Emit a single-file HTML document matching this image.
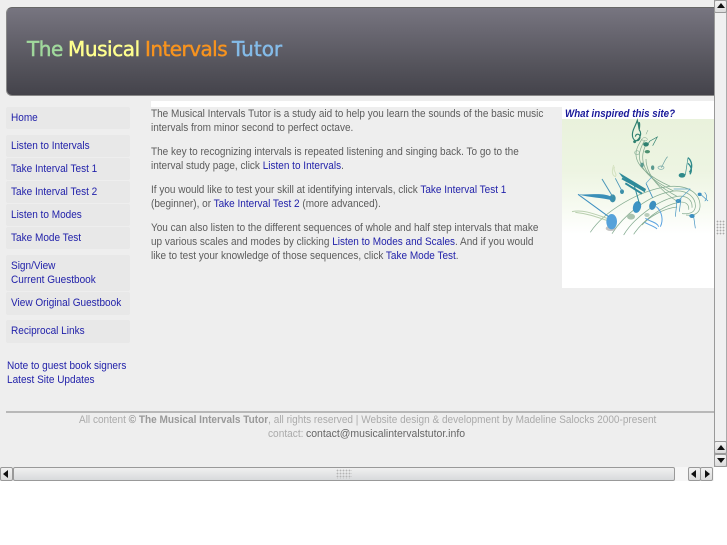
<!DOCTYPE html>
<html><head><meta charset="utf-8">
<style>
html,body{margin:0;padding:0;width:727px;height:545px;overflow:hidden;background:#fff}
*{box-sizing:border-box}
#page{position:absolute;left:0;top:0;width:714px;height:467px;background:#eee;overflow:hidden}
.t{position:absolute;white-space:nowrap;font-family:"Liberation Sans",Arial,sans-serif;font-size:11px;line-height:14px;color:#5c5c5c;transform:scaleX(.909);transform-origin:0 0;filter:blur(.25px)}
a{color:#2222aa;text-decoration:none}
.nb{position:absolute;left:6px;width:124px;background:#e8e8e8;border-radius:2px}
.n{position:absolute;left:11px;white-space:nowrap;font-family:"Liberation Sans",Arial,sans-serif;font-size:11px;line-height:14px;color:#2222aa;transform:scaleX(.912);transform-origin:0 0;filter:blur(.25px)}
#hdr{position:absolute;left:6px;top:7px;width:708px;height:89px;border-radius:6px 0 0 6px;background:linear-gradient(#777580,#6a6872 25%,#55545c 65%,#44434b);border-top:1px solid #666;border-left:1px solid #888;border-bottom:1px solid #888}
.h{position:absolute;top:37px;white-space:nowrap;font-family:"DejaVu Sans",sans-serif;font-size:20px;line-height:24px;font-weight:400;-webkit-text-stroke:.45px currentColor;letter-spacing:-.43px}
.sb{position:absolute;background:#f0f0f0}
.btn{position:absolute;background:linear-gradient(#f2f2f2,#dcdcdc);border:1px solid #999;border-radius:2px}
.a{position:absolute;width:0;height:0}
</style></head><body>
<div id="page">
<div id="hdr"></div>
<div class="h" style="left:27px;color:#a0d89c">The</div>
<div class="h" style="left:68px;color:#ffff8e">Musical</div>
<div class="h" style="left:145px;color:#f7931e;letter-spacing:-.55px">Intervals</div>
<div class="h" style="left:232px;color:#84bbe8;letter-spacing:0">Tutor</div>

<div style="position:absolute;left:151px;top:101px;width:563px;height:6px;background:#fff"></div>

<div class="nb" style="top:107px;height:22px"></div><div class="n" style="top:111px">Home</div>
<div class="nb" style="top:135px;height:22px"></div><div class="n" style="top:139px">Listen to Intervals</div>
<div class="nb" style="top:158px;height:22px"></div><div class="n" style="top:162px">Take Interval Test 1</div>
<div class="nb" style="top:181px;height:22px"></div><div class="n" style="top:185px">Take Interval Test 2</div>
<div class="nb" style="top:204px;height:22px"></div><div class="n" style="top:208px">Listen to Modes</div>
<div class="nb" style="top:227px;height:22px"></div><div class="n" style="top:231px">Take Mode Test</div>
<div class="nb" style="top:255px;height:36px"></div><div class="n" style="top:259px">Sign/View</div><div class="n" style="top:273px">Current Guestbook</div>
<div class="nb" style="top:292px;height:23px"></div><div class="n" style="top:296px">View Original Guestbook</div>
<div class="nb" style="top:320px;height:23px"></div><div class="n" style="top:324px">Reciprocal Links</div>
<div class="n" style="left:7px;top:359px">Note to guest book signers</div>
<div class="n" style="left:7px;top:373px">Latest Site Updates</div>

<div class="t" style="left:151px;top:107px">The Musical Intervals Tutor is a study aid to help you learn the sounds of the basic music</div>
<div class="t" style="left:151px;top:121px">intervals from minor second to perfect octave.</div>
<div class="t" style="left:151px;top:145px">The key to recognizing intervals is repeated listening and singing back. To go to the</div>
<div class="t" style="left:151px;top:159px">interval study page, click <a>Listen to Intervals</a>.</div>
<div class="t" style="left:151px;top:183px">If you would like to test your skill at identifying intervals, click <a>Take Interval Test 1</a></div>
<div class="t" style="left:151px;top:197px">(beginner), or <a>Take Interval Test 2</a> (more advanced).</div>
<div class="t" style="left:151px;top:221px">You can also listen to the different sequences of whole and half step intervals that make</div>
<div class="t" style="left:151px;top:235px">up various scales and modes by clicking <a>Listen to Modes and Scales</a>. And if you would</div>
<div class="t" style="left:151px;top:249px">like to test your knowledge of those sequences, click <a>Take Mode Test</a>.</div>

<div style="position:absolute;left:562px;top:107px;width:152px;height:181px;background:#fff"></div>
<div class="t" style="left:565px;top:107px;color:#1a1a9a;font-weight:bold;font-style:italic;transform:scaleX(.887)">What inspired this site?</div>
<div style="position:absolute;left:562px;top:119px;width:152px;height:115px;background:linear-gradient(#e9f2dc,#edf4e2 45%,#f6faf0 75%,#fff)"></div>
<svg style="position:absolute;left:562px;top:115px" width="155" height="125" viewBox="0 0 465 375" fill="none">
<g stroke="#84ab90" stroke-width="2.2">
<path d="M85 352C125 290 235 222 325 214C385 210 416 240 414 276C412 296 395 303 372 300"/>
<path d="M150 356C185 300 262 238 335 228C380 224 402 250 400 276C398 292 385 298 360 296"/>
<path d="M185 360C215 310 285 256 345 244C378 240 392 258 390 278"/>
<path d="M215 358C240 320 298 272 350 262C372 258 382 270 380 284"/>
<path d="M240 330C262 305 305 280 345 276"/>
<path d="M325 214C270 190 222 155 222 118C222 100 232 85 240 72"/>
<path d="M335 228C275 200 232 165 232 122C232 105 240 90 248 76"/>
<path d="M345 244C285 212 242 172 242 126C242 110 248 96 254 84"/>
<path d="M350 262C295 228 252 178 252 132"/>
<path d="M30 290C65 282 105 300 135 310M40 292C80 296 110 308 140 318" stroke="#b8cfae" stroke-width="3"/>
</g>
<ellipse cx="146" cy="340" rx="15" ry="8" fill="#aaa" opacity=".7"/>
<ellipse cx="149" cy="320" rx="16" ry="23" fill="#56a2da"/>
<g fill="#3a8fb8">
<ellipse cx="225" cy="276" rx="12" ry="18" transform="rotate(15 225 276)" fill="#3d93c4"/>
<ellipse cx="272" cy="271" rx="10" ry="14" transform="rotate(20 272 271)" fill="#3d8fc0"/>
<ellipse cx="152" cy="250" rx="9" ry="12" fill="#3b8fa8"/>
<ellipse cx="180" cy="230" rx="6" ry="7" fill="#3b8fa8"/>
<ellipse cx="360" cy="181" rx="10" ry="7" fill="#2f8a8a"/>
<ellipse cx="349" cy="258" rx="8" ry="6" fill="#3d8fc0"/>
<ellipse cx="390" cy="303" rx="8" ry="6" fill="#3d8fc0"/>
<ellipse cx="413" cy="238" rx="6" ry="5" fill="#3d8fc0"/>
<path d="M48 238C90 240 120 232 148 245L152 256C120 248 85 248 48 238Z"/>
<path d="M170 172L252 222L248 232L180 186Z" fill="#2f8a9a"/>
<path d="M180 190L245 226M190 205L240 236" stroke="#2f8a9a" stroke-width="6"/>
</g>
<ellipse cx="207" cy="305" rx="12" ry="9" fill="#a9c3ae"/>
<ellipse cx="255" cy="300" rx="8" ry="6" fill="#b8cdbb"/>
<g stroke="#3d8fc0" fill="none">
<path d="M48 238L140 305" stroke-width="3"/>
<path d="M120 192L152 245" stroke-width="3" stroke="#4a96b8"/>
<path d="M160 190L180 228" stroke-width="2.5" stroke="#4a96b8"/>
<path d="M215 205L232 265" stroke-width="3" stroke="#2f8a9a"/>
<path d="M252 205L272 248" stroke-width="2.5"/>
<path d="M270 185L252 205" stroke-width="2" stroke="#5aa2c8"/>
<path d="M370 180L378 128" stroke-width="2" stroke="#2f8a8a"/>
<path d="M378 128C392 140 392 160 382 172M378 145C390 155 390 168 384 178" stroke-width="4" stroke="#2f8a8a"/>
<path d="M345 258L340 305M357 250L352 290" stroke-width="2"/>
<path d="M335 222L385 222M345 260L385 222" stroke-width="2" stroke="#5aa2c8"/>
<path d="M395 305L400 340M418 240L438 258M428 232C440 245 430 258 428 258" stroke-width="2"/>
<path d="M283 275C300 290 305 315 295 335M250 310C265 320 285 322 290 335M248 322C265 332 280 335 285 342" stroke-width="3" stroke="#5aa2e0"/>
<path d="M298 158C302 152 310 130 317 125M288 158a9 5 0 1 0 18 0a9 5 0 1 0 -18 0" stroke="#6aa0a0" stroke-width="2"/>
</g>
<g stroke="#2f8070" fill="none">
<path d="M222 78C235 70 240 55 232 45C226 20 236 12 232 42L226 16C220 35 208 48 212 66C216 82 235 80 234 65C233 55 222 55 220 65" stroke-width="3.5"/>
<circle cx="218" cy="80" r="4" fill="#2f8070"/>
<path d="M258 45L252 58M248 68a8 5 0 1 0 .1 0" stroke-width="1.5" stroke="#7aa08a"/>
<ellipse cx="252" cy="88" rx="8" ry="6" fill="#2f8070"/>
<path d="M258 86L264 78L286 66L272 92" stroke-width="2"/>
<ellipse cx="256" cy="110" rx="8" ry="5" fill="#4d9070" stroke="none"/>
<ellipse cx="225" cy="113" rx="7" ry="6" stroke="#8fb59c" stroke-width="2"/>
<ellipse cx="240" cy="150" rx="5" ry="7" fill="#5a9a90" stroke="none"/>
<ellipse cx="272" cy="158" rx="5" ry="7" fill="#5a9a90" stroke="none"/>
</g>
<path d="M155 150C150 165 148 180 160 185C168 178 150 165 158 155" stroke="#d4e2c0" stroke-width="3"/>
</svg>

<div style="position:absolute;left:6px;top:411px;width:708px;height:2px;background:#b8b8b8"></div>
<div class="t" style="left:79px;top:412.5px;color:#aaa;transform:scaleX(.913)">All content <b style="color:#999">© The Musical Intervals Tutor</b>, all rights reserved | Website design &amp; development by Madeline Salocks 2000-present</div>
<div class="t" style="left:268px;top:427px;color:#aaa;transform:scaleX(.92)">contact:</div>
<div class="t" style="left:306px;top:427px;color:#666;transform:scaleX(.952)">contact@musicalintervalstutor.info</div>
</div>

<!-- vertical scrollbar -->
<div class="sb" style="left:714px;top:0;width:13px;height:467px;border-left:1px solid #999;border-right:1px solid #aaa"></div>
<div class="btn" style="left:714px;top:0;width:13px;height:13px"></div>
<div class="a" style="left:717px;top:3px;border:4px solid transparent;border-top:0;border-bottom:5px solid #111"></div>
<div class="btn" style="left:714px;top:441px;width:13px;height:13px"></div>
<div class="a" style="left:717px;top:445px;border:4px solid transparent;border-top:0;border-bottom:5px solid #111"></div>
<div class="btn" style="left:714px;top:454px;width:13px;height:13px"></div>
<div class="a" style="left:717px;top:458px;border:4px solid transparent;border-bottom:0;border-top:5px solid #111"></div>
<div style="position:absolute;left:716px;top:220px;width:9px;height:15px;background:radial-gradient(circle,#aaa 0.7px,transparent 1px) 0 0/3px 3px"></div>

<!-- horizontal scrollbar -->
<div style="position:absolute;left:0;top:467px;width:714px;height:14px;background:#f6f6f6"></div>
<div class="btn" style="left:0;top:467px;width:13px;height:14px"></div>
<div class="a" style="left:3px;top:470px;border:4px solid transparent;border-left:0;border-right:5px solid #111"></div>
<div style="position:absolute;left:13px;top:467px;width:662px;height:14px;background:linear-gradient(#f0f0f0,#d8dadc);border:1px solid #999;border-radius:2px"></div>
<div style="position:absolute;left:336px;top:469px;width:16px;height:10px;background:radial-gradient(circle,#b4b4b4 0.7px,transparent 1px) 0 0/3px 3px"></div>
<div class="btn" style="left:688px;top:467px;width:13px;height:14px"></div>
<div class="a" style="left:691px;top:470px;border:4px solid transparent;border-left:0;border-right:5px solid #111"></div>
<div class="btn" style="left:700px;top:467px;width:13px;height:14px"></div>
<div class="a" style="left:705px;top:470px;border:4px solid transparent;border-right:0;border-left:5px solid #111"></div>
</body></html>
